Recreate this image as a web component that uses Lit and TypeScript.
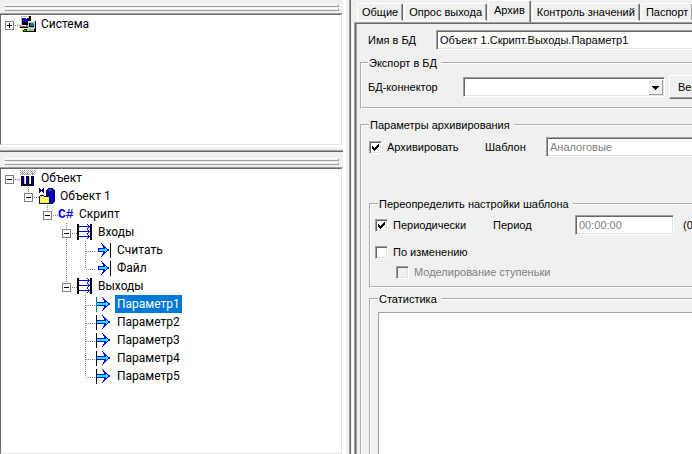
import { LitElement, html, css, svg, nothing } from "lit";
import { customElement, property, state } from "lit/decorators.js";
import { classMap } from "lit/directives/class-map.js";

type IconName = "system" | "plant" | "object" | "script" | "ports" | "input" | "output";

interface TreeNode {
  label: string;
  icon: IconName;
  open?: boolean;
  expandable?: boolean;
  children?: TreeNode[];
}

const systemTree: TreeNode = { label: "Система", icon: "system", expandable: true };

const objectTree: TreeNode = {
  label: "Объект", icon: "plant", expandable: true, open: true, children: [
    { label: "Объект 1", icon: "object", expandable: true, open: true, children: [
      { label: "Скрипт", icon: "script", expandable: true, open: true, children: [
        { label: "Входы", icon: "ports", expandable: true, open: true, children: [
          { label: "Считать", icon: "input" },
          { label: "Файл", icon: "input" },
        ] },
        { label: "Выходы", icon: "ports", expandable: true, open: true, children:
          [1, 2, 3, 4, 5].map((n): TreeNode => ({ label: `Параметр${n}`, icon: "output" })) },
      ] },
    ] },
  ],
};

// Checkerboard dither, the way 16-colour icons mix two shades.
const dots = (x0: number, y0: number, w: number, h: number) => {
  let d = "";
  for (let y = 0; y < h; y++) for (let x = y % 2; x < w; x += 2) d += `M${x0 + x} ${y0 + y}h1v1h-1z`;
  return d;
};

const shapes = {
  system: svg`
    <path fill="#000" d="M1 0h10v9H1zM8 5h8v11H8zM3 13h5v3H3z"/>
    <path fill="#808080" d="M0 9h8v3H0z"/><path fill="#000" d="M0 11h8v1H0z"/>
    <path fill="#c0c0c0" d="M1 0h8v1H2v8H1zM8 5h7v8H8zM7 13h7v2H7z"/>
    <path fill="#fff" d="M1 9h5v1H1zM8 5h6v1H8zM2 1h7v1H2z"/>
    <path fill="#00f" d="M3 2h4v4H3z"/><path fill="#fff" d="M6 2h1v1H6z"/>
    <path fill="#000" d="M9 7h5v4H9z"/><path fill="#008080" d="M10 7h4v3h-4z"/><path fill="#0ff" d="M13 7h1v1h-1z"/>
    <path fill="#ff0" d="M1 13h3v1H1zM2 12h1v4H2z"/>
    <path fill="#0f0" d="M9 14h2v1H9zM4 14h2v1H4z"/>`,
  plant: svg`
    <path fill="#a0a0a0" d=${dots(0, 0, 16, 5)}/>
    <path fill="#808080" d="M2 3h1v2H2zM7 3h1v2H7zM12 3h1v2h-1z"/>
    <path fill="#000" d="M1 14h13v2H1zM3 6h1v8H3zM8 6h1v8H8zM13 6h1v8h-1z"/>
    <path fill="#000080" d="M1 6h2v9H1zM6 6h2v9H6zM11 6h2v9h-2z"/>
    <path fill="#c0c0c0" d="M4 7h1v7H4zM9 7h1v7H9z"/>`,
  object: svg`
    <path fill="#000080" d="M8 1h1V0h5v1h1v1h1v12h-1v1h-1v1H9v-1H7V2h1z"/>
    <path fill="#00f" d="M12 4h2v10h-2z"/><path fill="#33c" d="M9 1h4v2H9z"/>
    <path fill="#000080" d="M0 0h1v5H0zM4 0h1v5H4zM1 1h1v3H1zM3 1h1v3H3zM2 2h1v1H2z"/>
    <path fill="#000080" d="M1 7h4v1h6v8H0V8h1z"/>
    <path fill="#ff0" d="M1 8h4v1h5v6H1z"/><path fill="#ffffb0" d=${dots(1, 9, 9, 5)}/>`,
  ports: svg`
    <path fill="#000" d="M0 0h2v16H0zM13 0h2v16h-2z"/>
    <path fill="#00f" d="M2 2h11v1H2zM2 7h11v1H2zM2 12h11v1H2zM10 0h1v1h-1zM11 1h1v1h-1zM11 3h1v1h-1zM10 4h1v1h-1zM10 5h1v1h-1zM11 6h1v1h-1zM11 8h1v1h-1zM10 9h1v1h-1zM10 10h1v1h-1zM11 11h1v1h-1zM11 13h1v1h-1zM10 14h1v1h-1z"/>`,
  input: svg`
    <path fill="#00f" d="M2 6h7v4H2z"/>
    <path fill="#00f" d="M5 1h1v1h1v1h1v1h1v1h1v1h1v1h2v2h-2v1h-1v1H9v1H8v1H7v1H6v1H5v-1h1v-2h1v-2h1V6H7V4H6V2H5z"/>
    <path fill="#0ff" d="M3 7h6V6h1v1h1v2h-1v1H9V9H3z"/>
    <path fill="#000" d="M14 1h1v15h-1z"/>`,
  output: svg`
    <path fill="#00f" d="M1 6h8v4H1z"/>
    <path fill="#00f" d="M6 1h1v1h1v1h1v1h1v1h1v1h1v1h2v2h-2v1h-1v1h-1v1H9v1H8v1H7v1H6v-1h1v-2h1v-2h1V6H8V4H7V2H6z"/>
    <path fill="#0ff" d="M1 7h9V6h1v1h1v2h-1v1h-1V9H1z"/>
    <path class="bar" d="M0 1h1v15H0z"/>`,
};

@customElement("node-icon")
class NodeIcon extends LitElement {
  @property() name: IconName = "input";
  @property({ type: Boolean, reflect: true }) selected = false;

  static styles = css`
    :host { display: block; width: 16px; height: 16px; }
    svg { display: block; shape-rendering: crispEdges; }
    .bar { fill: #000; }
    :host([selected]) .bar { fill: #008080; }
    .code { display: block; font: bold 13px/18px "Liberation Mono", monospace; color: #00f; }
  `;

  render() {
    if (this.name === "script") return html`<span class="code">C#</span>`;
    return html`<svg width="16" height="16" viewBox="0 0 16 16" aria-hidden="true">${shapes[this.name]}</svg>`;
  }
}

@customElement("tree-pane")
class TreePane extends LitElement {
  @property({ attribute: false }) root!: TreeNode;
  @state() selected = "Параметр1";

  static styles = css`
    :host { display: flex; flex-direction: column; min-height: 0; background: #f0f0f0; }
    .grip { display: flex; flex-direction: column; gap: 1px; padding: 4px 4px 2px; }
    .bar { box-sizing: border-box; height: 3px; border: 1px solid; border-color: #fff #a0a0a0 #a0a0a0 #fff; }
    .view {
      flex: 1; min-height: 0; overflow: hidden; background: #fff;
      border-top: 1px solid #a0a0a0; border-right: 1px solid #fff;
    }
    .sunken {
      box-sizing: border-box; height: 100%; border: 1px solid;
      border-color: #696969 #e3e3e3 #e3e3e3 #696969;
      font: 12px/18px Roboto, "Noto Sans", sans-serif; color: #000;
    }
    ul { list-style: none; margin: 0; padding: 0; }
    ul ul { padding-left: 19px; }
    li { position: relative; }
    ul ul > li::before {
      content: ""; position: absolute; left: 8px; top: 0; width: 1px; height: 100%;
      background: repeating-linear-gradient(#808080 0 1px, transparent 1px 2px);
    }
    ul ul > li:last-child::before { height: 10px; }
    .row { display: flex; height: 18px; align-items: center; }
    .knob {
      position: relative; box-sizing: border-box; width: 9px; height: 9px; margin: 2px 0 0 4px; padding: 0;
      border: 1px solid #808080; border-radius: 0;
      background: linear-gradient(#000, #000) center / 5px 1px no-repeat #fff;
    }
    .closed { background: linear-gradient(#000, #000) center / 5px 1px no-repeat, linear-gradient(#000, #000) center / 1px 5px no-repeat #fff; }
    .dash {
      width: 6px; height: 1px; margin-top: 2px;
      background: repeating-linear-gradient(90deg, transparent 0 1px, #808080 1px 2px);
    }
    .leaf { width: 11px; margin-left: 8px; }
    .label { margin-left: 3px; padding: 0 2px; white-space: nowrap; }
    .selected { background: #0078d7; color: #fff; }
  `;

  private toggle(node: TreeNode) {
    node.open = !node.open;
    this.requestUpdate();
  }

  private item(node: TreeNode): unknown {
    const on = node.label === this.selected;
    return html`<li role="treeitem" aria-selected=${on}>
      <div class="row">
        ${node.expandable
          ? html`<button class=${classMap({ knob: true, closed: !node.open })} aria-label=${node.label} @click=${() => this.toggle(node)}></button>`
          : nothing}
        <span class=${classMap({ dash: true, leaf: !node.expandable })}></span>
        <node-icon name=${node.icon} ?selected=${on}></node-icon>
        <span class=${classMap({ label: true, selected: on })} @click=${() => (this.selected = node.label)}>${node.label}</span>
      </div>
      ${node.open && node.children ? html`<ul role="group">${node.children.map((c) => this.item(c))}</ul>` : nothing}
    </li>`;
  }

  render() {
    return html`
      <div class="grip"><div class="bar"></div><div class="bar"></div></div>
      <div class="view"><div class="sunken"><ul role="tree">${this.item(this.root)}</ul></div></div>`;
  }
}

@customElement("archive-form")
class ArchiveForm extends LitElement {
  static styles = css`
    :host { display: block; min-width: 400px; height: 100%; }
    * { box-sizing: border-box; }
    form { display: flex; flex-direction: column; height: 100%; padding: 6px 0 0 4px; }
    .line { display: flex; align-items: center; }
    label, .note { white-space: nowrap; }
    fieldset { margin: 0; padding: 0; border: 2px groove #fff; min-width: 0; }
    legend { padding: 0 4px 0 1px; line-height: 14px; }
    .field {
      height: 20px; padding: 0 3px; border: 1px solid; border-color: #a0a0a0 #fff #fff #a0a0a0;
      box-shadow: inset 1px 1px #696969, inset -1px -1px #e3e3e3; background: #fff; border-radius: 0; font: inherit; color: #000; outline: none;
    }
    .field:disabled { color: #808080; opacity: 1; background: #fff; }
    .tick {
      appearance: none; flex: none; width: 13px; height: 13px; margin: 0; border: 1px solid;
      border-color: #a0a0a0 #fff #fff #a0a0a0; background: #fff; box-shadow: inset 1px 1px #696969, inset -1px -1px #e3e3e3;
    }
    .tick:disabled { background: #f0f0f0; }
    .tick:checked {
      background: #fff url("data:image/svg+xml,%3Csvg xmlns='http://www.w3.org/2000/svg' viewBox='0 0 11 11' shape-rendering='crispEdges'%3E%3Cpath d='M2 4h1v1h1v1h1V5h1V4h1V3h1V2h1v3H8v1H7v1H6v1H5v1H4V8H3V7H2z'/%3E%3C/svg%3E") center / 11px 11px;
    }
    .name { flex: none; padding-left: 8px; }
    .name label { width: 68px; }
    .grow { flex: 1; min-width: 0; }
    .export { flex: none; margin-top: 6px; padding: 5px 0 8px 6px; }
    .export label { width: 95px; }
    .combo {
      appearance: none; width: 202px;
      background:
        url("data:image/svg+xml,%3Csvg xmlns='http://www.w3.org/2000/svg' viewBox='0 0 16 17' shape-rendering='crispEdges'%3E%3Cpath fill='%23696969' d='M0 0h16v17H0z'/%3E%3Cpath fill='%23fff' d='M0 0h15v16H0z'/%3E%3Cpath fill='%23a0a0a0' d='M1 1h14v15H1z'/%3E%3Cpath fill='%23f0f0f0' d='M1 1h13v14H1z'/%3E%3Cpath d='M4 7h7v1H4zM5 8h5v1H5zM6 9h3v1H6zM7 10h1v1H7z'/%3E%3C/svg%3E") right 0 top 1px / 16px 17px no-repeat,
        #fff;
    }
    .push {
      width: 75px; height: 24px; margin-left: 4px; padding: 0 8px; border: 1px solid; border-color: #fff #696969 #696969 #fff;
      box-shadow: inset -1px -1px #a0a0a0; background: #f0f0f0; font: inherit; color: #000; border-radius: 0; text-align: left;
    }
    .archive { flex: 1; margin-top: 9px; padding: 5px 8px 0 7px; }
    .check { gap: 5px; height: 20px; }
    .first { width: 116px; }
    .template { width: 61px; }
    .override { margin-top: 40px; padding: 4px 0 4px 4px; }
    .override legend { margin-left: 3px; }
    .period-check { width: 118px; }
    .period { width: 82px; }
    .time { width: 99px; }
    .note { margin-left: 9px; }
    .change { margin-top: 7px; }
    .step { margin-left: 21px; color: #808080; }
    .stats { margin-top: 4px; padding: 6px 0 0 7px; }
    .log {
      display: block; width: 100%; height: 240px; resize: none; border: 1px solid #a0a0a0; border-radius: 0;
      background: #fff; font: inherit; outline: none;
    }
  `;

  render() {
    return html`<form @submit=${(e: Event) => e.preventDefault()}>
      <div class="line name"><label for="name">Имя в БД</label><input id="name" class="field grow" value="Объект 1.Скрипт.Выходы.Параметр1"></div>
      <fieldset class="export"><legend>Экспорт в БД</legend>
        <div class="line"><label for="db">БД-коннектор</label><select id="db" class="field combo"><option></option></select><button class="push" type="button">Вер</button></div>
      </fieldset>
      <fieldset class="archive"><legend>Параметры архивирования</legend>
        <div class="line">
          <div class="line check first"><input id="arc" class="tick" type="checkbox" checked><label for="arc">Архивировать</label></div>
          <label class="template" for="tpl">Шаблон</label><input id="tpl" class="field grow" value="Аналоговые" disabled>
        </div>
        <fieldset class="override"><legend>Переопределить настройки шаблона</legend>
          <div class="line">
            <div class="line check period-check"><input id="per" class="tick" type="checkbox" checked><label for="per">Периодически</label></div>
            <label class="period" for="time">Период</label><input id="time" class="field time" value="00:00:00" disabled><span class="note">(0</span>
          </div>
          <div class="line check change"><input id="chg" class="tick" type="checkbox"><label for="chg">По изменению</label></div>
          <div class="line check step"><input id="stp" class="tick" type="checkbox" disabled><label for="stp">Моделирование ступеньки</label></div>
        </fieldset>
        <fieldset class="stats"><legend>Статистика</legend><textarea class="log" aria-label="Статистика" readonly></textarea></fieldset>
      </fieldset>
    </form>`;
  }
}

@customElement("app-root")
class AppRoot extends LitElement {
  @state() tab = "Архив";

  static styles = css`
    :host { display: grid; grid-template-columns: 343px 3px minmax(0, 1fr); height: 100vh; overflow: hidden; background: #fff; }
    .left { display: flex; flex-direction: column; min-height: 0; background: #f0f0f0; }
    .top { flex: 0 0 145px; }
    .split {
      flex: none; box-sizing: border-box; height: 7px; border-top: 2px solid #fff;
      border-bottom: 1px solid #696969; box-shadow: inset 0 -1px #a0a0a0;
    }
    .bottom { flex: 1; padding-top: 2px; }
    .right { grid-column: 3; min-width: 0; padding-left: 3px; background: #f0f0f0; overflow: hidden; }
    .frame {
      display: flex; flex-direction: column; height: 100%; box-sizing: border-box; padding-left: 4px;
      border-left: 1px solid #a0a0a0; box-shadow: inset 1px 0 #696969;
      font: 11px/14px "Liberation Sans", Arial, sans-serif; color: #000;
    }
    .tabs { display: flex; flex: none; align-items: flex-end; gap: 1px; height: 22px; padding-left: 3px; }
    .tab {
      box-sizing: border-box; flex: none; height: 18px; margin-bottom: 1px; padding: 0 4px; border: 1px solid; border-color: #fff #696969 #fff #fff;
      border-radius: 2px 2px 0 0; box-shadow: inset -1px 0 #a0a0a0; background: #f0f0f0; font: inherit; color: #000; white-space: nowrap;
    }
    .current { height: 22px; margin-bottom: 0; padding: 0 5px 3px; border-bottom: 0; }
    .page {
      flex: 1; min-height: 0; padding: 1px 0 0 1px; overflow: hidden; border: 1px solid; border-width: 1px 0 0 1px; border-color: #a0a0a0;
      box-shadow: inset 1px 1px #696969, inset 2px 0 #a0a0a0, -2px 0 #fff;
    }
  `;

  render() {
    const tabs = ["Общие", "Опрос выхода", "Архив", "Контроль значений", "Паспорт"];
    return html`
      <div class="left">
        <tree-pane class="top" .root=${systemTree}></tree-pane>
        <div class="split"></div>
        <tree-pane class="bottom" .root=${objectTree}></tree-pane>
      </div>
      <div class="right"><div class="frame">
        <div class="tabs" role="tablist">${tabs.map((t) => html`<button role="tab" aria-selected=${t === this.tab}
          class=${classMap({ tab: true, current: t === this.tab })} @click=${() => (this.tab = t)}>${t}</button>`)}</div>
        <div class="page"><archive-form></archive-form></div>
      </div></div>`;
  }
}
